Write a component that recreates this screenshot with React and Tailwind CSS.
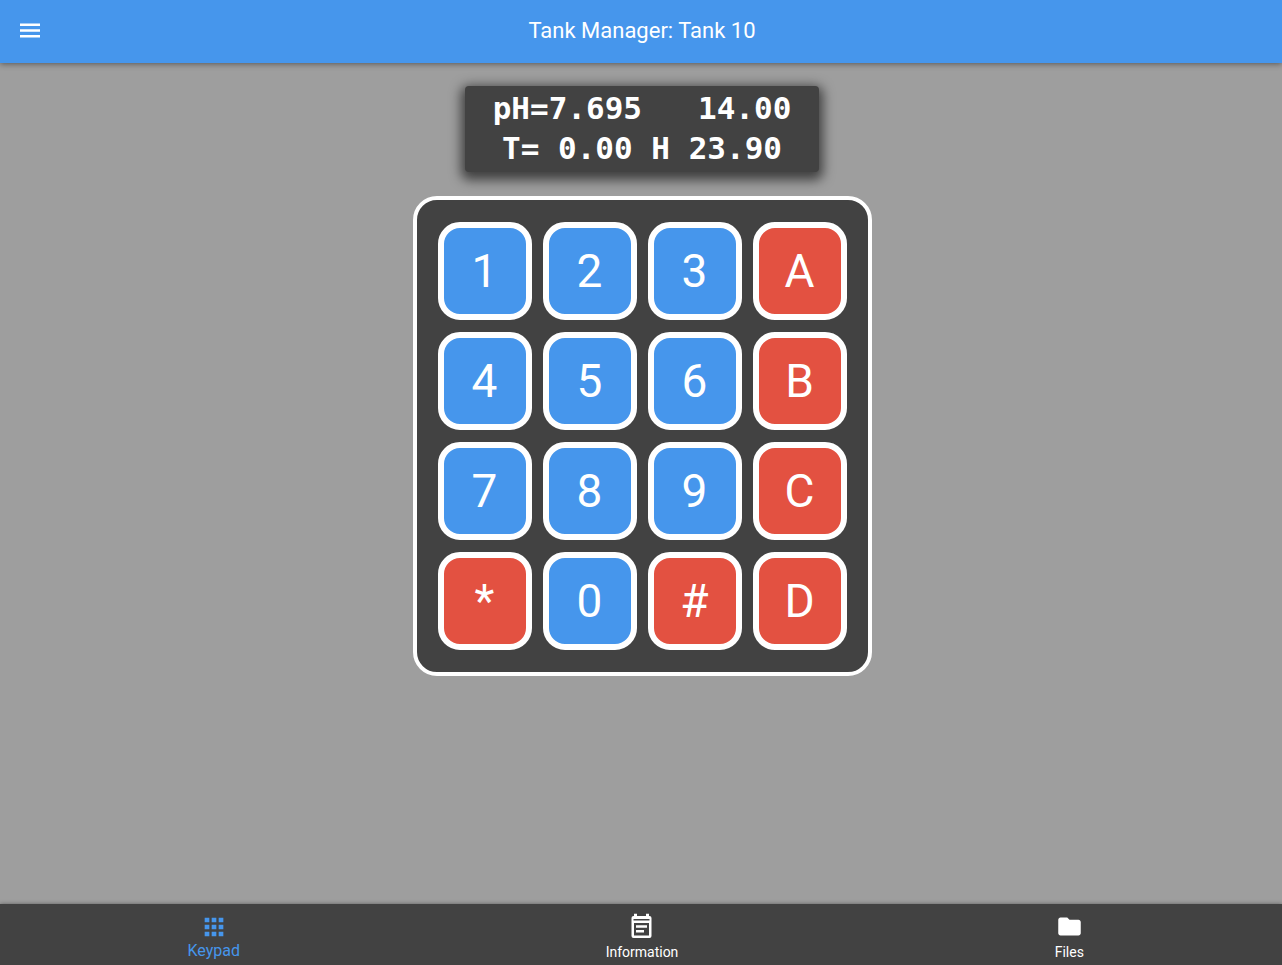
import { MdApps, MdFolder } from "react-icons/md";

const KEYS = ["1", "2", "3", "A", "4", "5", "6", "B", "7", "8", "9", "C", "*", "0", "#", "D"];

function MenuIcon() {
  return (
    <svg width="20" height="15" viewBox="0 0 20 15" fill="currentColor" aria-hidden="true">
      <path d="M0 .5h20v2.500H0zM0 6.300h20v2.500H0zM0 12.100h20v2.500H0z" />
    </svg>
  );
}

function NoteIcon() {
  return (
    <svg width="27" height="27" viewBox="0 0 27 27" fill="currentColor" aria-hidden="true">
      <path
        fillRule="evenodd"
        d="M6 .8h3V3h9V.8h3V3h.5a2 2 0 0 1 2 2v18a2 2 0 0 1-2 2h-16a2 2 0 0 1-2-2V5a2 2 0 0 1 2-2H6zM5.500 6v1.600h16V6zM6 10v12.500h15V10zM8 12.300h11v2.500H8zM8 17h8v2.500H8z"
      />
    </svg>
  );
}

function Key({ label }) {
  const color = /[0-9]/.test(label) ? "bg-[#4696ec]" : "bg-[#e35141]";
  return (
    <button
      type="button"
      className={`flex h-[98px] w-[94px] items-center justify-center rounded-[22px] border-6 border-white text-[46px] leading-none text-white ${color}`}
    >
      {label}
    </button>
  );
}

function Display() {
  return (
    <section
      aria-label="Display"
      className="flex h-[86px] w-[354px] flex-col items-center rounded bg-[#424242] pt-0.5 font-['DejaVu_Sans_Mono',monospace] text-[31px] leading-10 font-bold text-white shadow-[0_4px_12px_4px_rgba(0,0,0,0.6)]"
    >
      <p className="whitespace-pre">{"pH=7.695   14.00"}</p>
      <p className="whitespace-pre">{"T= 0.00 H 23.90"}</p>
    </section>
  );
}

export default function App() {
  return (
    <div className="flex min-h-screen flex-col bg-[#9e9e9e] font-[Roboto,sans-serif]">
      <header className="z-10 grid h-[63px] grid-cols-[60px_1fr_58px] items-center bg-[#4696ec] pb-0.5 text-white shadow-[0_1px_6px_rgba(0,0,0,0.45)]">
        <button type="button" aria-label="Open menu" className="flex h-10 items-center justify-center">
          <MenuIcon />
        </button>
        <h1 className="text-center text-[22px] leading-8">Tank Manager: Tank 10</h1>
      </header>

      <main className="flex flex-1 flex-col items-center gap-6 pt-[23px] pl-0.5">
        <Display />
        <div className="grid grid-cols-4 gap-x-[11px] gap-y-3 rounded-3xl border-4 border-white bg-[#424242] px-[21px] py-[22px]">
          {KEYS.map((key) => (
            <Key key={key} label={key} />
          ))}
        </div>
      </main>

      <nav className="grid h-[61px] grid-cols-3 bg-[#424242] text-sm text-white shadow-[0_0_4px_rgba(0,0,0,0.4)]">
        <a href="#keypad" aria-current="page" className="flex flex-col items-center pt-[9px] text-base leading-5 text-[#4696ec]">
          <MdApps size={28} />
          Keypad
        </a>
        <a href="#information" className="flex flex-col items-center pt-[9px] pl-0.5 leading-6">
          <NoteIcon />
          Information
        </a>
        <a href="#files" className="flex flex-col items-center pt-[9px] pl-0.5 leading-6">
          <MdFolder size={27} />
          Files
        </a>
      </nav>
    </div>
  );
}
